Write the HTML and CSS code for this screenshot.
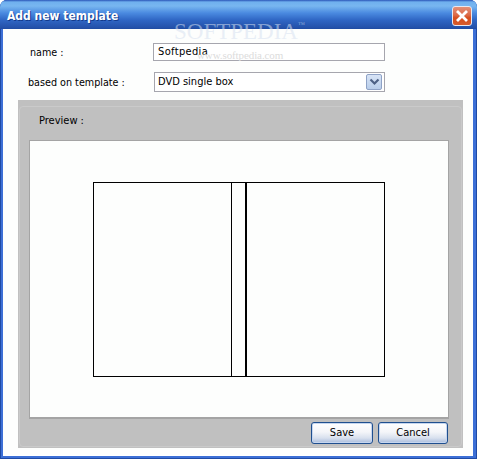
FILE: index.html
```html
<!DOCTYPE html>
<html lang="en">
<head>
<meta charset="utf-8">
<title>Add new template</title>
<link rel="stylesheet" href="styles.css">
</head>
<body>
<div class="window">
  <header class="titlebar">
    <span class="title">Add new template</span>
    <span class="close" aria-label="Close">
      <svg width="16" height="16" viewBox="0 0 16 16"><path d="M3 3l10 10M13 3L3 13" stroke="#fff" stroke-width="2.8" fill="none"/></svg>
    </span>
  </header>
  <main class="client">
    <div class="row row-name">
      <label class="label label-name">name :</label>
      <div class="field field-name">Softpedia</div>
    </div>
    <div class="row row-template">
      <label class="label label-template">based on template :</label>
      <div class="field field-select">
        <span class="select-value">DVD single box</span>
        <span class="drop">
          <svg width="11" height="8" viewBox="0 0 11 8"><path d="M1.5 1.5l4 4 4-4" stroke="#4d6185" stroke-width="2.2" fill="none"/></svg>
        </span>
      </div>
    </div>
    <section class="panel">
      <div class="panel-inner">
        <div class="preview-label">Preview :</div>
        <div class="preview">
          <div class="dvd">
            <div class="cover"></div>
            <div class="spine"></div>
            <div class="cover back"></div>
          </div>
        </div>
        <div class="actions">
          <button class="btn btn-save">Save</button>
          <button class="btn btn-cancel">Cancel</button>
        </div>
      </div>
    </section>
    <div class="wm wm-big">SOFTPEDIA<sup class="tm">™</sup></div>
    <div class="wm wm-small">www.softpedia.com</div>
  </main>
</div>
</body>
</html>
```
FILE: styles.css
```css
* { box-sizing: border-box; }
html, body { margin: 0; padding: 0; }
body { width: 477px; height: 459px; overflow: hidden; font-family: "DejaVu Sans Condensed", "DejaVu Sans", sans-serif; font-size: 11px; color: #000; }
.window { width: 477px; height: 459px; display: flex; flex-direction: column; background: #3c6fd6; box-shadow: inset 0 0 0 1px #1f4aa4; border-radius: 7px 7px 0 0; overflow: hidden; }
.titlebar { height: 29px; flex: none; display: flex; align-items: center; justify-content: space-between; padding: 2px 3px 0 7px;
  background: linear-gradient(to bottom, #2a55b8 0, #6fb0ee 2px, #78b6f0 6px, #4a8ae0 13px, #2f66c4 20px, #2350a8 28px, #1e4aa0 29px); }
.title { font-family: "DejaVu Sans Condensed", "DejaVu Sans", sans-serif; font-weight: bold; font-size: 12px; color: #fff; text-shadow: 1px 1px 0 #123a8c; }
.close { width: 20px; height: 20px; margin-right: 2px; display: flex; align-items: center; justify-content: center; border: 1px solid #e8e8f0; border-radius: 3px;
  background: linear-gradient(to bottom, #e49078 0, #dc6a48 45%, #d64e1e 60%, #d85c2c 100%); }
.client { position: relative; flex: 1; margin: 0 4px 3px 3px; background: #fdfefd; padding: 14px 0 0 0; display: flex; flex-direction: column; border-bottom: 1px solid #fff; }
.row { display: flex; align-items: center; }
.row-name { height: 18px; }
.row-template { height: 20px; margin-top: 11px; }
.label { font-size: 10.7px; white-space: nowrap; padding-top: 1px; }
.label-name { margin-left: 27px; width: 123px; }
.label-template { margin-left: 25px; width: 126px; }
.field { height: 100%; border: 1px solid #a6a6ae; background: #fff; font-size: 11px; display: flex; align-items: center; padding: 0 4px 1px; }
.field-name { width: 232px; letter-spacing: 0.35px; }
.field-select { width: 231px; justify-content: space-between; padding: 1px 2px 0 3px; align-items: flex-start; }
.select-value { padding-top: 1px; }
.drop { width: 16px; height: 16px; border: 1px solid #8ea2c6; border-radius: 2px; background: linear-gradient(to bottom, #d8e4f6, #b8cdea); display: flex; align-items: center; justify-content: center; }
.panel { margin: 8px 0 0 15px; width: 445px; height: 348px; background: #c0c0c0; padding: 6px 1px 1px 1px; }
.panel-inner { height: 100%; border: 1px solid #cacaca; border-radius: 4px; padding: 0 12px 0 9px; display: flex; flex-direction: column; }
.preview-label { font-size: 11px; height: 33px; padding: 7px 0 0 10px; }
.preview { width: 420px; height: 279px; background: #fdfefd; border: 1px solid #a4a4a4; border-bottom-width: 2px; padding: 41px 0 0 63px; }
.dvd { width: 292px; height: 195px; border: 1px solid #000; display: flex; }
.cover { width: 137px; }
.spine { width: 16px; border-left: 1px solid #000; border-right: 2px solid #000; }
.back { flex: 1; }
.actions { display: flex; justify-content: flex-end; gap: 5px; margin-top: 3px; margin-right: 1px; }
.btn { height: 22px; padding: 0 0 1px; border: 1px solid #1f4f8f; border-radius: 3px; font-family: "DejaVu Sans Condensed", "DejaVu Sans", sans-serif; font-size: 11px; color: #000;
  background: linear-gradient(to bottom, #fff 0, #f4f5f9 45%, #d8e0ee 75%, #a8bcdc 100%); box-shadow: inset 0 0 0 1px #c6d6ef; }
.btn-save { width: 62px; }
.btn-cancel { width: 70px; }
.wm { position: absolute; font-family: "Liberation Serif", serif; white-space: nowrap; pointer-events: none; }
.wm-big { left: 171px; top: -10px; font-size: 23px; color: rgba(215,225,240,0.55); }
.tm { font-size: 7px; vertical-align: top; position: relative; top: 2px; }
.wm-small { left: 194px; top: 20px; font-size: 11px; letter-spacing: -0.1px; color: #dcdcdc; }
```
